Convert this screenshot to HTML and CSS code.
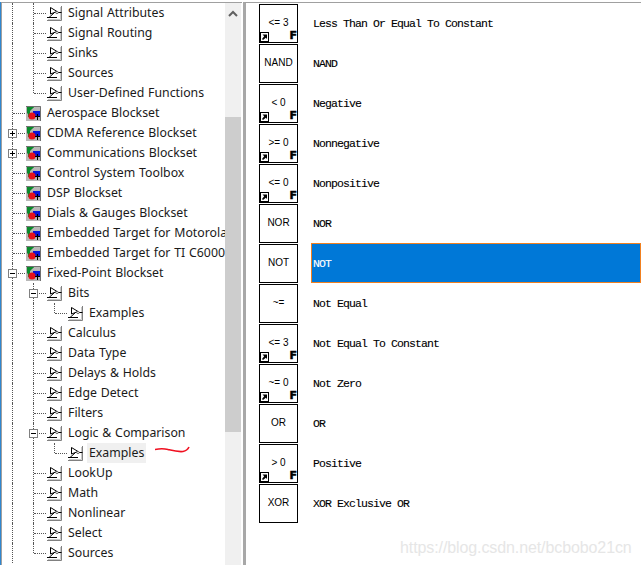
FILE: index.html
```html
<!DOCTYPE html>
<html lang="en">
<head>
<meta charset="utf-8">
<title>Simulink Library Browser</title>
<link rel="stylesheet" href="styles.css">
</head>
<body>
<svg class="defs" width="0" height="0" aria-hidden="true">
  <symbol id="lib" viewBox="0 0 15 15">
    <rect width="15" height="15" fill="#fff"/>
    <path d="M14.5 0V14.5H0" fill="none" stroke="#808080"/>
    <path d="M13.5 1V13.5H1" fill="none" stroke="#c8c8c8"/>
    <path d="M3.5 1.5V8L10 5.500L3.5 1.5M7 7L2 11.500H10" fill="none" stroke="#000"/>
    <path d="M11 6.500H14.500M0 11.500H2" stroke="#000"/>
    <circle cx="10" cy="6.500" r="1.200" fill="#fff" stroke="#333" stroke-width=".7"/>
  </symbol>
  <symbol id="set" viewBox="0 0 15 15">
    <rect width="15" height="15" fill="#b8b8b8"/>
    <path d="M0 .5H14.5V15" fill="none" stroke="#707070"/>
    <path d="M1 1H8L1 8Z" fill="#0a8a2a"/>
    <path d="M2 1V11H4V4L8 1Z" fill="#0a8a2a"/>
    <rect x="7" y="5" width="7" height="6" fill="#0a14d8"/>
    <circle cx="6" cy="10" r="3.6" fill="#e8101a"/>
    <path d="M9 10.500H14M11.500 8V14" stroke="#000"/>
  </symbol>
  <symbol id="link" viewBox="0 0 9 10">
    <rect x=".5" y=".5" width="8" height="9" fill="#fff" stroke="#000"/>
    <path d="M2.500 2.500H7V7L5.800 5.800L3 8L2 7L4.200 4.200Z" fill="#000"/>
  </symbol>
</svg>
<main class="app">
  <section class="tree-pane">
    <div class="tree">
      <div class="row"><i class="guide"></i><i class="elbow"></i><svg class="icon"><use href="#lib"/></svg><span class="name">Signal Attributes</span></div>
      <div class="row"><i class="guide"></i><i class="elbow"></i><svg class="icon"><use href="#lib"/></svg><span class="name">Signal Routing</span></div>
      <div class="row"><i class="guide"></i><i class="elbow"></i><svg class="icon"><use href="#lib"/></svg><span class="name">Sinks</span></div>
      <div class="row"><i class="guide"></i><i class="elbow"></i><svg class="icon"><use href="#lib"/></svg><span class="name">Sources</span></div>
      <div class="row"><i class="guide"></i><i class="elbow last"></i><svg class="icon"><use href="#lib"/></svg><span class="name">User-Defined Functions</span></div>
      <div class="row"><i class="elbow"></i><svg class="icon"><use href="#set"/></svg><span class="name">Aerospace Blockset</span></div>
      <div class="row"><i class="elbow"><b class="toggle plus"></b></i><svg class="icon"><use href="#set"/></svg><span class="name">CDMA Reference Blockset</span></div>
      <div class="row"><i class="elbow"><b class="toggle plus"></b></i><svg class="icon"><use href="#set"/></svg><span class="name">Communications Blockset</span></div>
      <div class="row"><i class="elbow"></i><svg class="icon"><use href="#set"/></svg><span class="name">Control System Toolbox</span></div>
      <div class="row"><i class="elbow"></i><svg class="icon"><use href="#set"/></svg><span class="name">DSP Blockset</span></div>
      <div class="row"><i class="elbow"></i><svg class="icon"><use href="#set"/></svg><span class="name">Dials &amp; Gauges Blockset</span></div>
      <div class="row"><i class="elbow"></i><svg class="icon"><use href="#set"/></svg><span class="name">Embedded Target for Motorola MPC555</span></div>
      <div class="row"><i class="elbow"></i><svg class="icon"><use href="#set"/></svg><span class="name">Embedded Target for TI C6000 DSP</span></div>
      <div class="row"><i class="elbow"><b class="toggle"></b></i><svg class="icon"><use href="#set"/></svg><span class="name">Fixed-Point Blockset</span></div>
      <div class="row"><i class="guide"></i><i class="elbow"><b class="toggle"></b></i><svg class="icon"><use href="#lib"/></svg><span class="name">Bits</span></div>
      <div class="row"><i class="guide"></i><i class="guide"></i><i class="elbow last"></i><svg class="icon"><use href="#lib"/></svg><span class="name">Examples</span></div>
      <div class="row"><i class="guide"></i><i class="elbow"></i><svg class="icon"><use href="#lib"/></svg><span class="name">Calculus</span></div>
      <div class="row"><i class="guide"></i><i class="elbow"></i><svg class="icon"><use href="#lib"/></svg><span class="name">Data Type</span></div>
      <div class="row"><i class="guide"></i><i class="elbow"></i><svg class="icon"><use href="#lib"/></svg><span class="name">Delays &amp; Holds</span></div>
      <div class="row"><i class="guide"></i><i class="elbow"></i><svg class="icon"><use href="#lib"/></svg><span class="name">Edge Detect</span></div>
      <div class="row"><i class="guide"></i><i class="elbow"></i><svg class="icon"><use href="#lib"/></svg><span class="name">Filters</span></div>
      <div class="row"><i class="guide"></i><i class="elbow"><b class="toggle"></b></i><svg class="icon"><use href="#lib"/></svg><span class="name">Logic &amp; Comparison</span></div>
      <div class="row"><i class="guide"></i><i class="guide"></i><i class="elbow last"></i><svg class="icon"><use href="#lib"/></svg><span class="name current">Examples</span><svg class="scribble" width="36" height="8" viewBox="0 0 36 8"><path d="M0 3.500C5 2.500 9 2.500 13 3.500S22 6 28 5.500C31 5 33 3 34 1" fill="none" stroke="#f01020" stroke-width="1.600"/></svg></div>
      <div class="row"><i class="guide"></i><i class="elbow"></i><svg class="icon"><use href="#lib"/></svg><span class="name">LookUp</span></div>
      <div class="row"><i class="guide"></i><i class="elbow"></i><svg class="icon"><use href="#lib"/></svg><span class="name">Math</span></div>
      <div class="row"><i class="guide"></i><i class="elbow"></i><svg class="icon"><use href="#lib"/></svg><span class="name">Nonlinear</span></div>
      <div class="row"><i class="guide"></i><i class="elbow"></i><svg class="icon"><use href="#lib"/></svg><span class="name">Select</span></div>
      <div class="row"><i class="guide"></i><i class="elbow last"></i><svg class="icon"><use href="#lib"/></svg><span class="name">Sources</span></div>
    </div>
    <div class="scrollbar">
      <svg class="arrow" width="16" height="8" viewBox="0 0 16 8"><path d="M4 7L8 3L12 7" fill="none" stroke="#606060" stroke-width="2"/></svg>
      <div class="thumb"></div>
    </div>
  </section>
  <section class="list-pane">
    <div class="item"><div class="block">&lt;= 3<svg class="link"><use href="#link"/></svg><span class="mask">F</span></div><div class="label">Less Than Or Equal To Constant</div></div>
    <div class="item"><div class="block">NAND</div><div class="label">NAND</div></div>
    <div class="item"><div class="block">&lt; 0<svg class="link"><use href="#link"/></svg><span class="mask">F</span></div><div class="label">Negative</div></div>
    <div class="item"><div class="block">&gt;= 0<svg class="link"><use href="#link"/></svg><span class="mask">F</span></div><div class="label">Nonnegative</div></div>
    <div class="item"><div class="block">&lt;= 0<svg class="link"><use href="#link"/></svg><span class="mask">F</span></div><div class="label">Nonpositive</div></div>
    <div class="item"><div class="block">NOR</div><div class="label">NOR</div></div>
    <div class="item"><div class="block">NOT</div><div class="label selected">NOT</div></div>
    <div class="item"><div class="block">~=</div><div class="label">Not Equal</div></div>
    <div class="item"><div class="block">&lt;= 3<svg class="link"><use href="#link"/></svg><span class="mask">F</span></div><div class="label">Not Equal To Constant</div></div>
    <div class="item"><div class="block">~= 0<svg class="link"><use href="#link"/></svg><span class="mask">F</span></div><div class="label">Not Zero</div></div>
    <div class="item"><div class="block">OR</div><div class="label">OR</div></div>
    <div class="item"><div class="block">&gt; 0<svg class="link"><use href="#link"/></svg><span class="mask">F</span></div><div class="label">Positive</div></div>
    <div class="item"><div class="block">XOR</div><div class="label">XOR Exclusive OR</div></div>
    <div class="watermark">https://blog.csdn.net/bcbobo21cn</div>
  </section>
</main>
</body>
</html>
```
FILE: styles.css
```css
html, body {
  margin: 0;
  padding: 0;
  background: #fff;
}
body {
  height: 565px;
  overflow: hidden;
}
.defs {
  position: absolute;
}
.app {
  display: flex;
  height: 563px;
  padding-top: 2px;
  overflow: hidden;
}
.tree-pane {
  display: flex;
  width: 241px;
  box-sizing: border-box;
  flex: none;
  border-left: 1px solid #a0a0a0;
  margin-left: 1px;
  border-top: 1px solid #a0a0a0;
  margin-right: 1px;
  box-shadow: -1px 0 0 #2f86cf;
}
.tree {
  width: 223px;
  overflow: hidden;
  font: 12.3px/20px "Noto Sans", sans-serif;
  word-spacing: .6px;
  color: #1a1a1a;
}
.row {
  display: flex;
  height: 20px;
  padding-left: 10px;
  white-space: nowrap;
  align-items: flex-start;
}
.guide {
  flex: none;
  width: 20px;
  height: 20px;
  border-left: 1px dotted #555;
}
.elbow {
  position: relative;
  flex: none;
  width: 14px;
  height: 20px;
  box-sizing: border-box;
}
.elbow::before {
  content: "";
  position: absolute;
  left: 0;
  top: 0;
  bottom: 0;
  border-left: 1px dotted #555;
}
.elbow.last::before {
  bottom: 10px;
}
.elbow::after {
  content: "";
  position: absolute;
  left: 1px;
  right: 1px;
  top: 10px;
  border-top: 1px dotted #555;
}
.toggle {
  position: absolute;
  z-index: 1;
  left: -4px;
  top: 6px;
  width: 7px;
  height: 7px;
  border: 1px solid #808080;
  background: linear-gradient(#000, #000) center / 5px 1px no-repeat #fff;
}
.toggle.plus {
  background:
    linear-gradient(#000, #000) center / 5px 1px no-repeat,
    linear-gradient(#000, #000) center / 1px 5px no-repeat,
    #fff;
}
.icon {
  flex: none;
  width: 15px;
  height: 15px;
  margin-top: 3px;
}
.name {
  flex: none;
  margin-left: 4px;
  padding: 0 2px;
  height: 20px;
}
.current {
  background: #f0f0f0;
}
.scribble {
  flex: none;
  margin: 3px 0 0 9px;
}
.scrollbar {
  flex: none;
  width: 16px;
  background: #f0f0f0;
}
.arrow {
  display: block;
  margin-top: 6px;
}
.thumb {
  height: 315px;
  margin-top: 100px;
  background: #cdcdcd;
}
.list-pane {
  position: relative;
  flex: 1;
  padding-left: 13px;
  border-left: 3px solid #a8a8a8;
  border-top: 1px solid #a0a0a0;
}
.item {
  display: flex;
  height: 40px;
}
.block {
  position: relative;
  flex: none;
  display: flex;
  align-items: center;
  justify-content: center;
  width: 39px;
  height: 39px;
  margin: 1px 13px 0 0;
  padding-bottom: 3px;
  box-sizing: border-box;
  border: 1px solid #000;
  font: 10px "Liberation Sans", sans-serif;
  color: #000;
}
.link {
  position: absolute;
  left: 0;
  bottom: 0;
  width: 9px;
  height: 10px;
}
.mask {
  position: absolute;
  right: 0;
  bottom: 2px;
  font: bold 11px/8px "DejaVu Sans", sans-serif;
  -webkit-text-stroke: .5px #000;
}
.label {
  flex: 1;
  padding-left: 2px;
  box-sizing: border-box;
  font: 11.5px/41px "Liberation Mono", monospace;
  letter-spacing: -.9px;
  -webkit-text-stroke: .1px currentColor;
  color: #000;
}
.selected {
  background: #0078d7;
  color: #fff;
  outline: 1px solid #f08020;
  outline-offset: -1px;
}
.watermark {
  position: absolute;
  left: 154px;
  top: 535px;
  font: 16px/20px "Liberation Sans", sans-serif;
  letter-spacing: -.1px;
  color: #e6e6e6;
  white-space: nowrap;
}
```
